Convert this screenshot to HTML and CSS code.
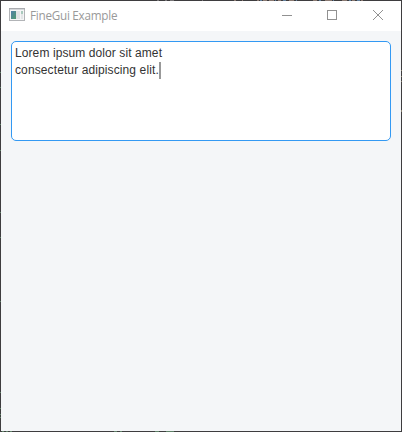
FILE: index.html
```html
<!DOCTYPE html>
<html lang="en">
<head>
<meta charset="utf-8">
<title>FineGui Example</title>
<link rel="stylesheet" href="styles.css">
</head>
<body>
<svg class="backdrop" width="402" height="432" fill="none" shape-rendering="crispEdges">
  <path stroke="#777577" d="M157 .5h2M165 .5h2M170 .5h4M202 .5h1"/>
  <path stroke="#8b7a72" d="M234 .5h2M242 .5h1M257 .5h2M263 .5h4M269 .5h5M278 .5h3M289 .5h5M313 .5h4M325 .5h7M342 .5h5M352 .5h3M361 .5h2"/>
  <path stroke="#63809c" d="M260 .5h2M275 .5h1M283 .5h3M296 .5h1M319 .5h2M333 .5h1M349 .5h2M357 .5h3"/>
  <path stroke="#5e8067" d="M.5 72v1M.5 87v1M.5 124v1M.5 150v1M.5 212v1M.5 237v1M.5 301v1M.5 392v1M.5 408v1M.5 414v1M.5 417v1M2 431.5h2M6 431.5h2M10 431.5h2M114 431.5h3M120 431.5h2M155 431.5h4M166 431.5h8"/>
  <path stroke="#8a8070" d="M401.5 70v1M401.5 76v1M401.5 81v1M401.5 110v2"/>
</svg>
<div class="window">
  <header class="titlebar">
    <svg class="app-icon" width="16" height="14" viewBox="0 0 16 14" shape-rendering="crispEdges">
      <defs><linearGradient id="g" x1="0" y1="0" x2="1" y2="1"><stop offset="0" stop-color="#507fa8"/><stop offset="1" stop-color="#4f9a70"/></linearGradient></defs>
      <rect x=".5" y=".5" width="15" height="12" fill="#f4f5f6" stroke="#b2b4b7"/>
      <rect x="0" y="0" width="16" height="1" fill="#a9abaf"/>
      <rect x="1" y="1" width="14" height="1" fill="#d5d7da"/>
      <rect x="2" y="3" width="5" height="8" fill="url(#g)"/>
      <rect x="7" y="3" width="4" height="8" fill="#dfe2e4"/>
      <rect x="12" y="3" width="2" height="3" fill="#a9c9bd"/>
      <rect x="12" y="6" width="2" height="5" fill="#e3e5e7"/>
    </svg>
    <h1 class="title">FineGui Example</h1>
    <div class="controls">
      <svg width="46" height="29" viewBox="0 0 46 29" shape-rendering="crispEdges"><path d="M19 14.5h10"/></svg>
      <svg width="46" height="29" viewBox="0 0 46 29" shape-rendering="crispEdges"><path d="M18.5 9.5h9v9h-9z"/></svg>
      <svg width="46" height="29" viewBox="0 0 46 29"><path d="M18 9l10 10M28 9L18 19"/></svg>
    </div>
  </header>
  <main class="content">
    <div class="textarea">
      <div class="line first">Lorem ipsum dolor sit amet</div>
      <div class="line"><span class="second">consectetur adipiscing elit.</span><i class="caret"></i></div>
    </div>
  </main>
</div>
</body>
</html>
```
FILE: styles.css
```css
* { box-sizing: border-box; }
body { margin: 0; background: #3e3d3f; }
.backdrop { position: absolute; top: 0; left: 0; z-index: -1; }
.window {
  height: 432px;
  padding: 1px;
  display: flex;
  flex-direction: column;
}
.titlebar {
  height: 30px;
  display: flex;
  align-items: flex-start;
  padding-left: 8px;
  background: #fff;
}
.app-icon { margin-top: 7px; }
.title {
  margin: 0 0 0 5px;
  font: 11.7px/28px "Open Sans", "Noto Sans", sans-serif;
  color: #999;
  letter-spacing: -0.25px;
}
.controls { display: flex; margin-left: auto; }
.controls svg { display: block; fill: none; stroke: #919191; stroke-width: 1; }
.content { flex: 1; padding: 10px; background: #f4f6f8; }
.textarea {
  height: 100px;
  padding: 3px;
  border: 1px solid #3399f3;
  border-radius: 5px;
  background: #fff;
  color: #333;
  font: 12px/17px "Liberation Sans", Arial, sans-serif;
}
.line { display: flex; height: 17px; white-space: nowrap; }
.first { letter-spacing: 0.09px; }
.second { letter-spacing: 0.11px; }
.caret { width: 2px; height: 17px; background: #999; }
```
